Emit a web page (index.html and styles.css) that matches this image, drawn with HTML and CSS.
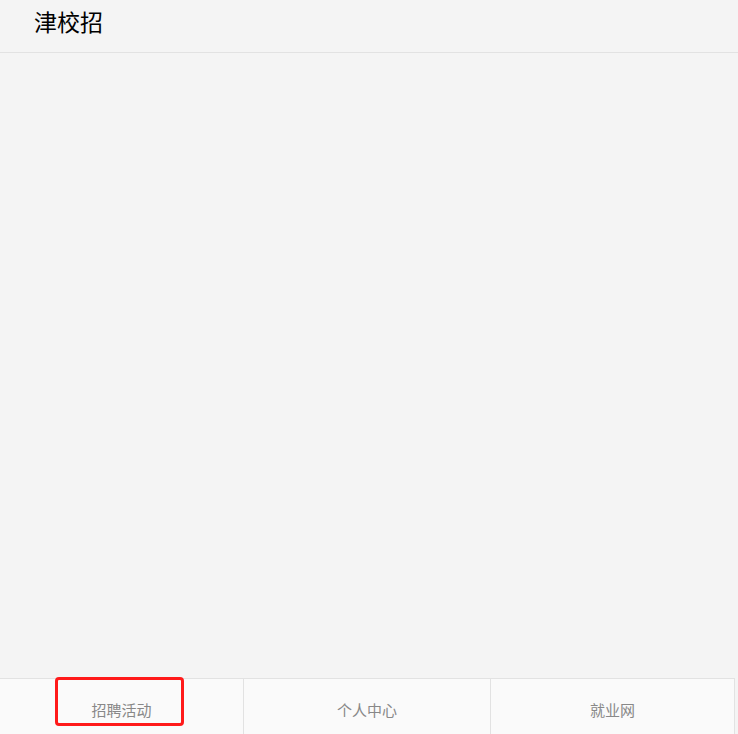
FILE: index.html
```html
<!DOCTYPE html>
<html lang="zh">
<head>
<meta charset="utf-8">
<title>津校招</title>
<link rel="stylesheet" href="styles.css">
</head>
<body>
<div class="app">
  <header class="header">
    <h1 class="title">津校招</h1>
  </header>
  <main class="content"></main>
  <nav class="tabbar">
    <div class="tab tab-active"><span class="tab-label">招聘活动</span><span class="highlight"></span></div>
    <div class="tab tab-wide"><span class="tab-label">个人中心</span></div>
    <div class="tab"><span class="tab-label">就业网</span></div>
  </nav>
</div>
</body>
</html>
```
FILE: styles.css
```css
html, body {
  margin: 0;
  padding: 0;
  height: 100%;
  background: #f4f4f4;
  font-family: "Noto Sans CJK SC", "Noto Sans", sans-serif;
}
.app {
  display: flex;
  flex-direction: column;
  height: 734px;
}
.header {
  height: 53px;
  border-bottom: 1px solid #e2e2e2;
  box-sizing: border-box;
  display: flex;
  align-items: center;
  padding-left: 34px;
}
.title {
  margin: 0;
  font-size: 23px;
  font-weight: 400;
  color: #000;
  line-height: 1;
  position: relative;
  top: -5px;
}
.content {
  flex: 1;
}
.tabbar {
  height: 56px;
  box-sizing: border-box;
  border-top: 1px solid #e2e2e2;
  background: #fafafa;
  display: flex;
  width: 735px;
}
.tab {
  width: 244px;
  border-right: 1px solid #e2e2e2;
  display: flex;
  align-items: center;
  justify-content: center;
  padding-top: 6px;
  position: relative;
  box-sizing: border-box;
}
.tab-wide {
  width: 247px;
}
.tab-label {
  font-size: 15px;
  color: #888;
}
.highlight {
  position: absolute;
  left: 55px;
  top: -2px;
  width: 129px;
  height: 49px;
  box-sizing: border-box;
  border: 3px solid #ff1a1a;
  border-radius: 4px;
}
```
